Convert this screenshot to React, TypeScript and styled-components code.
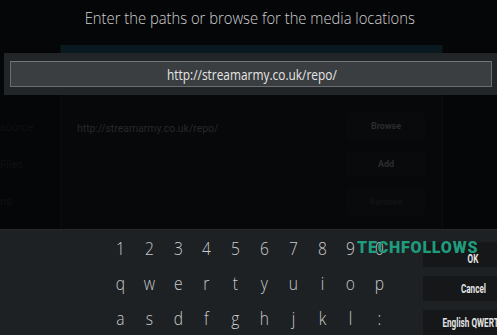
import styled, { createGlobalStyle } from 'styled-components'

const GlobalStyle = createGlobalStyle`
  html, body {
    margin: 0;
    padding: 0;
    background: #050607;
  }
  * { box-sizing: border-box; }
`

const digits = ['1', '2', '3', '4', '5', '6', '7', '8', '9', '0']
const rowQ = ['q', 'w', 'e', 'r', 't', 'y', 'u', 'i', 'o', 'p']
const rowA = ['a', 's', 'd', 'f', 'g', 'h', 'j', 'k', 'l', ':']

export default function App() {
  return (
    <Screen>
      <GlobalStyle />
      {/* dimmed source dialog behind the keyboard */}
      <Backdrop>
        <SideList>
          <Faint>source</Faint>
          <Faint>Files</Faint>
          <Faint>ns</Faint>
        </SideList>
        <Panel>
          <PanelHead />
          <PanelBody>
            <PathText>http://streamarmy.co.uk/repo/</PathText>
            <PanelButtons>
              <GhostButton>Browse</GhostButton>
              <GhostButton>Add</GhostButton>
              <GhostButton $off>Remove</GhostButton>
            </PanelButtons>
          </PanelBody>
        </Panel>
      </Backdrop>

      {/* keyboard dialog */}
      <Dialog>
        <Title>
          <Narrow>Enter the paths or browse for the media locations</Narrow>
        </Title>
        <InputStrip>
          <InputField>
            <Narrow>http://streamarmy.co.uk/repo/</Narrow>
          </InputField>
        </InputStrip>
        <Spacer />
        <Keyboard>
          <Keys>
            {[digits, rowQ, rowA].map((row, i) => (
              <KeyRow key={i}>
                {row.map((k) => (
                  <Key key={k}>{k}</Key>
                ))}
              </KeyRow>
            ))}
          </Keys>
          <SideButtons>
            <SideButton $top="8px"><Label>OK</Label></SideButton>
            <SideButton><Label>Cancel</Label></SideButton>
            <SideButton><Label>English QWERTY</Label></SideButton>
          </SideButtons>
          <Watermark>TECHFOLLOWS</Watermark>
        </Keyboard>
      </Dialog>
    </Screen>
  )
}

const Screen = styled.div`
  width: 497px;
  height: 335px;
  overflow: hidden;
  display: grid;
  background: #050607;
  font-family: 'Open Sans', 'Noto Sans', sans-serif;
`
const Narrow = styled.span`
  display: inline-block;
  white-space: nowrap;
  transform: scaleX(0.87);
`

//background dialog
const Backdrop = styled.div`
  grid-area: 1 / 1;
  display: flex;
  padding-top: 45px;
  height: 229px;
`
const SideList = styled.div`
  width: 60px;
  display: flex;
  flex-direction: column;
  gap: 24px;
  padding-top: 76px;
  overflow: hidden;
`
const Faint = styled.div`
  font-family: 'Roboto', sans-serif;
  font-size: 11px;
  color: #0e1011;
  white-space: nowrap;
`
const Panel = styled.div`
  width: 383px;
  background: #07080a;
  display: flex;
  flex-direction: column;
  border-left: 1px solid #0b0c0e;
  border-right: 1px solid #0b0c0e;
`
const PanelHead = styled.div`
  height: 8px;
  background: #0a1820;
`
const PanelBody = styled.div`
  display: flex;
  justify-content: space-between;
  padding: 60px 17px 0 16px;
`
const PathText = styled.div`
  font-family: 'Roboto', sans-serif;
  font-size: 11px;
  color: #262829;
  margin-top: 9px;
  transform: scaleX(0.95);
  transform-origin: left;
`
const PanelButtons = styled.div`
  display: flex;
  flex-direction: column;
  gap: 12px;
`
const GhostButton = styled.div<{ $off?: boolean }>`
  width: 78px;
  height: 26px;
  display: flex;
  align-items: center;
  justify-content: center;
  background: #090a0c;
  font-family: 'Roboto', sans-serif;
  font-weight: 700;
  font-size: 9px;
  color: ${(p) => (p.$off ? '#111314' : '#2a2c2e')};
`

//keyboard dialog
const Dialog = styled.div`
  grid-area: 1 / 1;
  display: flex;
  flex-direction: column;
  height: 335px;
  min-width: 0;
`
const Title = styled.div`
  height: 45px;
  padding-top: 6px;
  text-align: center;
  font-weight: 300;
  font-size: 17px;
  color: #cfd0d0;
  padding-left: 2px;
`
const InputStrip = styled.div`
  margin-top: 8px;
  margin-left: 4px;
  height: 42px;
  background: #212528;
  padding: 8px 5px 0 6px;
`
const InputField = styled.div`
  height: 26px;
  background: #3a3e41;
  border: 1px solid #6a6e70;
  border-top-color: #72767a;
  display: flex;
  align-items: center;
  justify-content: center;
  font-size: 14px;
  color: #e6e6e6;
  padding-left: 1px;
  & > span {
    transform: scaleX(0.85);
  }
`
const Spacer = styled.div`
  flex: 1;
`
const Keyboard = styled.div`
  position: relative;
  height: 106px;
  background: #1d2124;
  border-top: 1px solid #262a2d;
  display: flex;
  justify-content: space-between;
`
const Keys = styled.div`
  padding: 1px 0 0 106px;
  display: flex;
  flex-direction: column;
`
const KeyRow = styled.div`
  display: flex;
  height: 37px;
`
const Key = styled.div`
  width: 28.8px;
  display: flex;
  align-items: center;
  justify-content: center;
  font-weight: 300;
  font-size: 19px;
  color: #c9cbcc;
  transform: scaleX(0.82);
`
// buttons run past the right edge of the screen
const SideButtons = styled.div`
  flex: none;
  width: 100px;
  margin-right: -26px;
  padding-top: 12px;
  display: flex;
  flex-direction: column;
  gap: 9px;
`
const SideButton = styled.div<{ $top?: string }>`
  height: 25px;
  background: #151719;
  display: flex;
  align-items: center;
  justify-content: center;
  white-space: nowrap;
  padding-top: ${(p) => p.$top ?? '0'};
`
const Label = styled.span`
  display: inline-block;
  font-family: 'Roboto', sans-serif;
  font-weight: 700;
  font-size: 12px;
  color: #e4e4e4;
  transform: scaleX(0.68);
`
const Watermark = styled.div`
  position: absolute;
  left: 357px;
  top: 10px;
  font-family: 'Roboto', sans-serif;
  font-weight: 900;
  font-size: 16px;
  letter-spacing: 0.8px;
  color: #1f9c7c;
  line-height: 1;
`
